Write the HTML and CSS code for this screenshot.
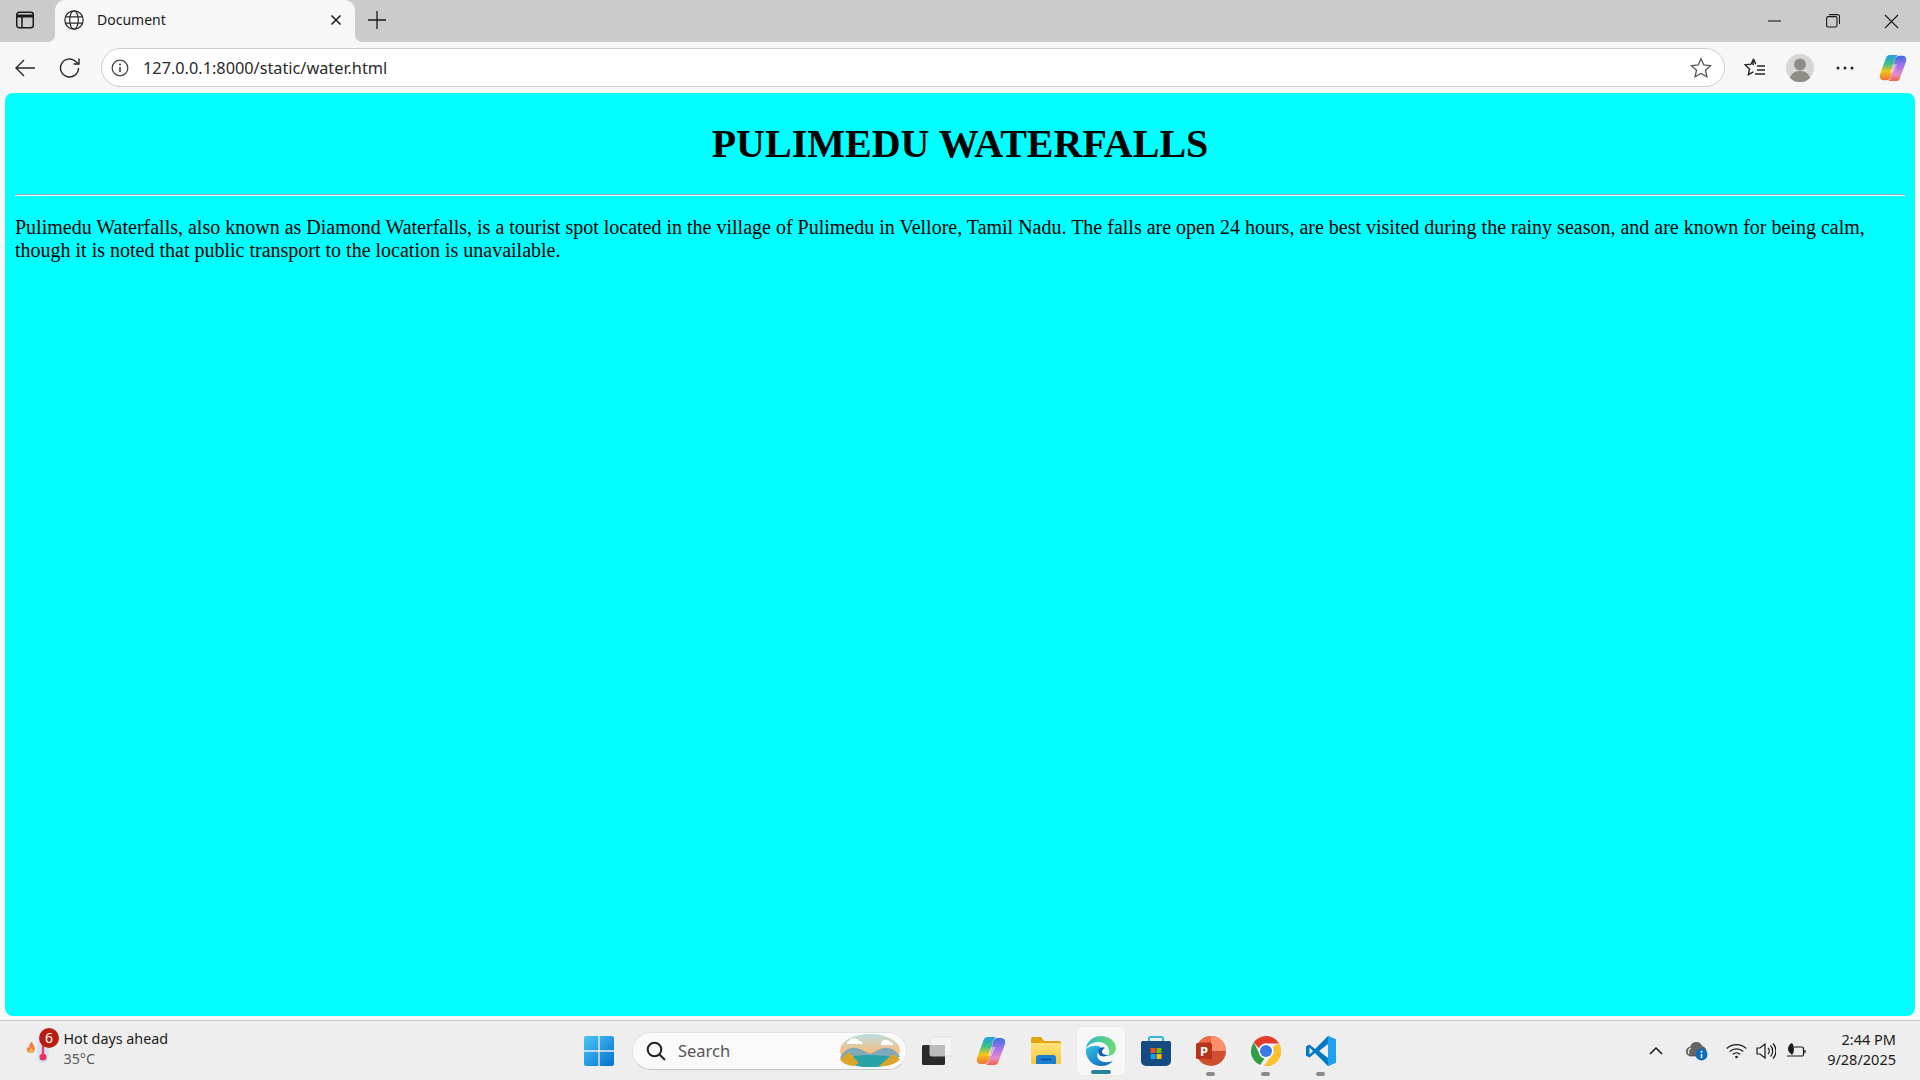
FILE: index.html
```html
<!DOCTYPE html>
<html lang="en">
<head>
<meta charset="utf-8">
<title>Document</title>
<link rel="stylesheet" href="styles.css">
</head>
<body>
<svg class="defs" width="0" height="0" aria-hidden="true">
  <defs>
    <linearGradient id="copA" x1="0" y1="0" x2="0" y2="1"><stop offset="0" stop-color="#1f9fe8"/><stop offset=".35" stop-color="#3fc08a"/><stop offset=".65" stop-color="#f5c518"/><stop offset="1" stop-color="#f4703a"/></linearGradient>
    <linearGradient id="copC" x1="0" y1="0" x2="0" y2="1"><stop offset="0" stop-color="#3a6fe8"/><stop offset=".4" stop-color="#a873e8"/><stop offset=".75" stop-color="#e68ac8"/><stop offset="1" stop-color="#f3603f"/></linearGradient>
    <linearGradient id="winG" x1="0" y1="0" x2="1" y2="1"><stop offset="0" stop-color="#4dc4f7"/><stop offset="1" stop-color="#0072cf"/></linearGradient>
    <linearGradient id="edgeG" x1="0" y1="0" x2="1" y2="1"><stop offset="0" stop-color="#35c1e8"/><stop offset="1" stop-color="#0d5fb0"/></linearGradient>
    <linearGradient id="edgeT" x1="0" y1="0" x2="1" y2="0"><stop offset="0" stop-color="#2fb9c9"/><stop offset="1" stop-color="#6fdc6f"/></linearGradient>
    <linearGradient id="skyG" x1="0" y1="0" x2="0" y2="1"><stop offset="0" stop-color="#b9e0e0"/><stop offset=".55" stop-color="#f8bd84"/><stop offset="1" stop-color="#f7a35a"/></linearGradient>
    <linearGradient id="folderG" x1="0" y1="0" x2="0" y2="1"><stop offset="0" stop-color="#ffe27a"/><stop offset="1" stop-color="#f9c93c"/></linearGradient>
    <g id="copilot">
      <path d="M8 3Q9 1 12 1H20Q18 2 17 5L13 24Q12 28 8 28H5Q0 28 1 22Z" fill="url(#copA)"/>
      <path d="M22 27Q21 29 18 29H10Q12 28 13 25L17 6Q18 2 22 2H25Q30 2 29 8Z" fill="url(#copC)"/>
      <path d="M15 11h4.500L15.500 20H11.500z" fill="#fff" opacity=".4"/>
    </g>
  </defs>
</svg>

<header class="tabstrip">
  <div class="tabstrip-left">
    <svg class="ic-sidebar" width="20" height="20" viewBox="0 0 20 20" fill="none" stroke="#1a1a1a" stroke-width="1.500"><rect x="1.750" y="2.250" width="16.500" height="15.500" rx="2.500"/><path d="M1.750 6h16.500" stroke-width="3"/><path d="M7 6v11.500"/></svg>
  </div>
  <div class="tab">
    <svg width="20" height="20" viewBox="0 0 20 20" fill="none" stroke="#2a2a2a" stroke-width="1.200"><circle cx="10" cy="10" r="9.200"/><ellipse cx="10" cy="10" rx="4.300" ry="9.200"/><path d="M1.500 6.800h17M1.500 13.200h17"/></svg>
    <span class="tab-title">Document</span>
    <svg class="tab-close" width="12" height="12" viewBox="0 0 12 12" stroke="#1a1a1a" stroke-width="1.500"><path d="M1.500 1.500l9 9M10.500 1.500l-9 9"/></svg>
  </div>
  <svg class="ic-plus" width="18" height="18" viewBox="0 0 18 18" stroke="#1a1a1a" stroke-width="1.300"><path d="M9 0v18M0 9h18"/></svg>
  <div class="winctl">
    <svg width="14" height="14" viewBox="0 0 14 14" stroke="#1a1a1a" stroke-width="1.100"><path d="M0 7h13"/></svg>
    <svg width="14" height="14" viewBox="0 0 14 14" fill="none" stroke="#1a1a1a" stroke-width="1.100"><rect x=".6" y="2.600" width="10.400" height="10.400" rx="1.600"/><path d="M3 .6h8.500a2 2 0 0 1 2 2V10"/></svg>
    <svg width="15" height="15" viewBox="0 0 15 15" stroke="#1a1a1a" stroke-width="1.100"><path d="M1 1l13 13M14 1L1 14"/></svg>
  </div>
</header>

<nav class="toolbar">
  <svg class="ic-back" width="20" height="18" viewBox="0 0 20 18" fill="none" stroke="#262626" stroke-width="1.400"><path d="M20 9H1M9 1L1 9l8 8"/></svg>
  <svg class="ic-reload" width="22" height="22" viewBox="0 0 22 22" fill="none" stroke="#262626" stroke-width="1.400"><path d="M19.500 11a9 9 0 1 1-2.800-6.500L19.500 7"/><path d="M20 1.500V7h-5.500"/></svg>
  <div class="address">
    <svg width="18" height="18" viewBox="0 0 18 18" fill="none" stroke="#444" stroke-width="1.300"><circle cx="9" cy="9" r="7.800"/><path d="M9 8v5" stroke-width="1.600"/><circle cx="9" cy="5.500" r="1" fill="#444" stroke="none"/></svg>
    <span class="url">127.0.0.1:8000/static/water.html</span>
    <svg class="ic-star" width="22" height="22" viewBox="0 0 22 22" fill="none" stroke="#555" stroke-width="1.300"><path d="M11 1.800l2.800 6.200 6.700.7-5 4.500 1.400 6.600L11 16.400l-5.900 3.400 1.400-6.600-5-4.500 6.700-.7z"/></svg>
  </div>
  <div class="tools">
    <svg class="tool-fav" width="22" height="22" viewBox="0 0 22 22" fill="none" stroke="#262626" stroke-width="1.400"><path d="M10 7.500l-1-.2L9.500 2 7 7.200l-5.800.7 4.300 4-1.100 5.800 5-2.800"/><path d="M9.500 2l2.300 5.200M13 9h8M13 13h8M11 17h10"/></svg>
    <svg class="tool-profile" width="28" height="28" viewBox="0 0 28 28"><circle cx="14" cy="14" r="14" fill="#d8d6d2"/><circle cx="14" cy="10.500" r="6" fill="#8f8b87"/><path d="M4 24c1.500-5 5-7 10-7s8.500 2 10 7a14 14 0 0 1-20 0z" fill="#8f8b87"/></svg>
    <svg class="tool-dots" width="18" height="4" viewBox="0 0 18 4" fill="#262626"><circle cx="2" cy="2" r="1.500"/><circle cx="9" cy="2" r="1.500"/><circle cx="16" cy="2" r="1.500"/></svg>
    <svg class="tool-copilot" width="28" height="28" viewBox="0 0 30 30"><use href="#copilot"/></svg>
  </div>
</nav>

<div class="viewport">
  <main class="page">
    <h1 class="heading">PULIMEDU WATERFALLS</h1>
    <hr class="rule">
    <p class="copy">Pulimedu Waterfalls, also known as Diamond Waterfalls, is a tourist spot located in the village of Pulimedu in Vellore, Tamil Nadu. The falls are open 24 hours, are best visited during the rainy season, and are known for being calm, though it is noted that public transport to the location is unavailable.</p>
  </main>
</div>

<footer class="taskbar">
  <div class="weather">
    <div class="weather-icon">
      <svg width="28" height="32" viewBox="0 0 28 32"><path d="M6 17c-3.500 0-5-3-3.500-6 .5.800 1 1 1.500.8C4 9 5 7 7 5.500c-.2 2 2.800 3.500 2.800 7 0 2.500-1.500 4.500-3.800 4.500z" fill="#f0803a"/><path d="M6 16.500c-1.500 0-2.300-1.200-1.800-2.800.5.300 1 .3 1.300 0 0-1 .5-1.700 1-2 .3 1 1.500 1.800 1.500 3 0 1-1 1.800-2 1.800z" fill="#fcc24c"/><rect x="12.500" y="4" width="11" height="23" rx="5.500" fill="#cfe4f7"/><rect x="16.800" y="8" width="2.400" height="12" fill="#e8436a"/><circle cx="18" cy="21" r="3.500" fill="#e8325f"/></svg>
      <span class="badge">6</span>
    </div>
    <div class="weather-text">
      <span class="weather-title">Hot days ahead</span>
      <span class="weather-temp">35°C</span>
    </div>
  </div>
  <div class="apps">
    <svg class="app-win" width="30" height="30" viewBox="0 0 30 30" fill="url(#winG)"><path d="M0 2a2 2 0 0 1 2-2h12.300v14.300H0zM15.700 0H28a2 2 0 0 1 2 2v12.300H15.700zM0 15.700h14.300V30H2a2 2 0 0 1-2-2zM15.700 15.700H30V28a2 2 0 0 1-2 2H15.700z"/></svg>
    <div class="searchbox">
      <svg width="20" height="20" viewBox="0 0 20 20" fill="none" stroke="#222" stroke-width="2"><circle cx="8.500" cy="8.500" r="6.800"/><path d="M13.500 13.500L19 19"/></svg>
      <span class="search-label">Search</span>
      <svg class="search-art" width="62" height="33" viewBox="0 0 62 33"><ellipse cx="31" cy="16.500" rx="30" ry="16.500" fill="url(#skyG)"/><path d="M3 20c6-7 12-8 20-4l8 4 8-4c8-4 14-3 20 4l2 3-60 1z" fill="#7fa9b8"/><path d="M10 7c3-4 8-3 10 0 3 0 4 2 3 3H9c-2 0-1-3 1-3zM42 9c2-4 7-4 9-1 2 0 4 2 3 3H42z" fill="#fff"/><path d="M6 24c12-4 38-4 50 0l-8 7c-10 3-24 3-34 0z" fill="#2aa3a8"/><path d="M1 25l9-7 10 11-5 3c-6 0-12-3-14-7zM61 25l-7-5-14 12c8 1 17-2 21-7z" fill="#d9a52c"/></svg>
    </div>
    <svg class="app-taskview" width="30" height="29" viewBox="0 0 30 29"><rect x="0" y="9" width="23" height="20" rx="1.500" fill="#2b2b2b"/><rect x="8" y="1" width="22" height="19" rx="1.500" fill="#f4f4f4" stroke="#dadada" stroke-width=".8"/><rect x="8" y="9" width="15" height="11" fill="#bcbcbc"/></svg>
    <svg class="app-copilot" width="30" height="30" viewBox="0 0 30 30"><use href="#copilot"/></svg>
    <svg class="app-folder" width="30" height="27" viewBox="0 0 30 27"><path d="M0 2a2 2 0 0 1 2-2h8l3 4h15a2 2 0 0 1 2 2v4H0z" fill="#e0a40f"/><path d="M0 6h28a2 2 0 0 1 2 2v19H2a2 2 0 0 1-2-2z" fill="url(#folderG)"/><path d="M5 27v-6a3 3 0 0 1 3-3h14a3 3 0 0 1 3 3v6z" fill="#1a7fd0"/><path d="M10 22.500h10" stroke="#0a4f96" stroke-width="1.500"/></svg>
    <div class="app-edge">
      <svg width="30" height="30" viewBox="0 0 30 30"><path d="M15 0C7 0 1 5 0 12c3-4 7-6 12-6 6 0 10 3 11 8 1 2 0 5-2 6h1c5 0 8-4 8-8C30 5 23 0 15 0z" fill="url(#edgeT)"/><path d="M0 13c-1 9 6 17 15 17 5 0 9-2 12-5-3 1-8 2-12 0-4-2-5-7-2-10 1-1 2-2 3-2-2-3-5-4-8-3-4 0-7 2-8 3z" fill="url(#edgeG)"/><path d="M14 12c-3 2-2 7 1 8 3 1 6 0 7-1-3 0-6-1-6-3s1-3 3-4c-1-1-3-1-5 0z" fill="#0d5fb0"/></svg>
      <span class="run-edge"></span>
    </div>
    <svg class="app-store" width="30" height="30" viewBox="0 0 30 30"><path d="M8 5V2.500A1.500 1.500 0 0 1 9.500 1h11A1.500 1.500 0 0 1 22 2.500V5" fill="none" stroke="#2fb8e0" stroke-width="2"/><path d="M0 6.500A1.500 1.500 0 0 1 1.500 5h27A1.500 1.500 0 0 1 30 6.500V25a5 5 0 0 1-5 5H5a5 5 0 0 1-5-5z" fill="#174a80"/><rect x="9.500" y="12" width="5" height="5" fill="#f25022"/><rect x="15.500" y="12" width="5" height="5" fill="#7fba00"/><rect x="9.500" y="18" width="5" height="5" fill="#00a4ef"/><rect x="15.500" y="18" width="5" height="5" fill="#ffb900"/></svg>
    <div class="app-slot">
      <svg width="30" height="30" viewBox="0 0 30 30"><circle cx="15" cy="15" r="15" fill="#d04f2f"/><path d="M15 0a15 15 0 0 1 15 15H15z" fill="#ff8f6b"/><path d="M15 0A15 15 0 0 0 3 6h12z" fill="#ed6c47"/><rect x="0" y="7" width="16" height="16" rx="1.500" fill="#b7341a"/><text class="ppt-letter" x="8" y="20">P</text></svg>
      <span class="run-dot"></span>
    </div>
    <div class="app-slot">
      <svg width="30" height="30" viewBox="0 0 30 30"><path d="M15 0a15 15 0 0 1 13 7.500H15a7.500 7.500 0 0 0-7 4.700L2.800 6.500A15 15 0 0 1 15 0z" fill="#e33b2e"/><path d="M2.800 6.500L8.500 18a7.500 7.500 0 0 0 5 4.500L9 29A15 15 0 0 1 2.800 6.500z" fill="#2f9e44"/><path d="M28 7.500A15 15 0 0 1 13 30l6-8.500A7.500 7.500 0 0 0 21.500 11z" fill="#fbc02d"/><circle cx="15" cy="15" r="7.500" fill="#fff"/><circle cx="15" cy="15" r="6" fill="#3b78e7"/></svg>
      <span class="run-dot"></span>
    </div>
    <div class="app-slot">
      <svg width="30" height="30" viewBox="0 0 30 30"><path d="M22 0l8 3.500v23L22 30 9 17l-5.500 4.500L0 19.500v-9L3.500 8.500 9 13z" fill="#0078c8"/><path d="M22 0l8 3.500v23L22 30z" fill="#1fa2ee"/><path d="M22 8l-9 7 9 7z" fill="#eeeeee"/><path d="M3.500 11.500L7 15l-3.500 3.500z" fill="#eeeeee"/></svg>
      <span class="run-dot"></span>
    </div>
  </div>
  <div class="tray">
    <svg class="tray-chev" width="14" height="8" viewBox="0 0 14 8" fill="none" stroke="#1a1a1a" stroke-width="1.500"><path d="M1 7l6-6 6 6"/></svg>
    <svg class="tray-cloud" width="22" height="20" viewBox="0 0 22 20"><path d="M5 15a4.500 4.500 0 0 1-.5-9A6 6 0 0 1 16 5.500 5 5 0 0 1 17 15z" fill="#666" stroke="#333" stroke-width=".6"/><path d="M3 13a4 4 0 0 1 2-6" fill="none" stroke="#eee" stroke-width="1.200"/><circle cx="15.500" cy="13.500" r="6" fill="#0f6cbd"/><path d="M15.500 13v4" stroke="#fff" stroke-width="1.500"/><circle cx="15.500" cy="10.700" r="1" fill="#fff"/></svg>
    <svg class="tray-wifi" width="21" height="16" viewBox="0 0 21 16" fill="none" stroke="#1a1a1a" stroke-width="1.200"><path d="M.8 5.500a14 14 0 0 1 19.400 0M3.800 8.500a10 10 0 0 1 13.400 0M6.800 11.300a5.500 5.500 0 0 1 7.400 0"/><circle cx="10.500" cy="14" r="1.300" fill="#1a1a1a" stroke="none"/></svg>
    <svg class="tray-sound" width="20" height="18" viewBox="0 0 20 18" fill="none" stroke="#1a1a1a" stroke-width="1.200"><path d="M1 6h3l5-4v14l-5-4H1z"/><path d="M12 6a4 4 0 0 1 0 6M14.500 3.500a8 8 0 0 1 0 11M17 1.500a11 11 0 0 1 0 15"/></svg>
    <svg class="tray-batt" width="20" height="18" viewBox="0 0 20 18" fill="none" stroke="#1a1a1a" stroke-width="1.200"><path d="M8 5h8a1.500 1.500 0 0 1 1.500 1.500v6A1.500 1.500 0 0 1 16 14H1M19 8v3"/><path d="M6 1C2 3 1 7 3 10l3 3c2-2 3-8 0-12z" fill="#1a1a1a" stroke="none"/></svg>
    <div class="clock">
      <span>2:44 PM</span>
      <span>9/28/2025</span>
    </div>
  </div>
</footer>
</body>
</html>
```
FILE: styles.css
```css
* { box-sizing: border-box; }

html, body { height: 100%; }

body {
  margin: 0;
  height: 1080px;
  overflow: hidden;
  display: flex;
  flex-direction: column;
  background: #f7f7f7;
  font-family: "Noto Sans", "Open Sans", sans-serif;
  color: #1a1a1a;
}

svg { display: block; flex: none; }
.defs { position: absolute; }

/* Tab strip */
.tabstrip {
  height: 42px;
  flex: none;
  display: flex;
  align-items: center;
  background: #cbcbcb;
}
.tabstrip-left { width: 55px; padding-left: 15px; padding-bottom: 2px; }
.tab {
  position: relative;
  width: 300px;
  height: 42px;
  display: flex;
  align-items: center;
  padding: 0 13px 2px 9px;
  background: #f7f7f7;
  border-radius: 10px 10px 0 0;
}
.tab::before, .tab::after {
  content: "";
  position: absolute;
  bottom: 0;
  width: 8px;
  height: 8px;
}
.tab::before { left: -8px; background: radial-gradient(circle at 0 0, transparent 8px, #f7f7f7 8.5px); }
.tab::after { right: -8px; background: radial-gradient(circle at 100% 0, transparent 8px, #f7f7f7 8.5px); }
.tab-title { margin-left: 13px; margin-bottom: 2px; font-size: 14px; }
.tab-close { margin-left: auto; }
.ic-plus { margin-left: 13px; margin-bottom: 2px; }
.winctl {
  margin-left: auto;
  display: flex;
  align-items: center;
  gap: 44px;
  padding-right: 21px;
}

/* Toolbar */
.toolbar {
  height: 51px;
  flex: none;
  display: flex;
  align-items: center;
  padding: 0 13px 0 15px;
  background: #f7f7f7;
}
.ic-reload { margin-left: 24px; }
.address {
  width: 1625px;
  height: 39px;
  margin-left: 20px;
  display: flex;
  align-items: center;
  padding: 0 12px 0 9px;
  background: #fff;
  border: 1px solid #cdcdcd;
  border-radius: 20px;
}
.url { margin-left: 14px; font-size: 16.3px; color: #2b2b2b; }
.ic-star { margin-left: auto; }
.tools { display: flex; align-items: center; margin-left: 19px; }
.tool-profile { margin-left: 20px; }
.tool-dots { margin-left: 22px; }
.tool-copilot { margin-left: 25px; }

/* Page */
.viewport {
  flex: 1;
  min-height: 0;
  padding: 0 5px 4px;
  display: flex;
}
.page {
  flex: 1;
  padding: 0 10px;
  display: flow-root;
  background: #0ff;
  border-radius: 8px;
  color: #000;
  font-family: "Liberation Serif", "Times New Roman", serif;
}
.heading {
  margin: 28px 0 27px;
  font-size: 40px;
  line-height: 46px;
  font-weight: 700;
  text-align: center;
}
.rule {
  height: 2px;
  margin: 0;
  border: 0;
  border-top: 1px solid #9ea8a8;
  border-bottom: 1px solid #dff;
}
.copy {
  margin: 20px 0;
  font-size: 20px;
  line-height: 23px;
}

/* Taskbar */
.taskbar {
  height: 60px;
  flex: none;
  display: flex;
  align-items: center;
  background: #eee;
  border-top: 1px solid #c6c6c6;
}
.weather {
  width: 584px;
  height: 100%;
  display: flex;
  align-items: center;
  padding-left: 25px;
}
.weather-icon {
  position: relative;
  width: 28px;
  height: 32px;
  margin-top: 3px;
}
.badge {
  position: absolute;
  left: 14px;
  top: -8px;
  width: 20px;
  height: 20px;
  border-radius: 50%;
  background: #b91d12;
  color: #fff;
  font-size: 14px;
  line-height: 20px;
  text-align: center;
}
.weather-text {
  display: flex;
  flex-direction: column;
  margin-left: 10.500px;
  margin-bottom: 4px;
  font-size: 14.3px;
  line-height: 20px;
}
.weather-temp { color: #5a5a5a; }

.apps {
  display: flex;
  align-items: center;
  height: 100%;
}
.searchbox {
  width: 275px;
  height: 38px;
  margin-left: 18px;
  display: flex;
  align-items: center;
  padding: 0 5px 0 13px;
  background: #fafafa;
  border: 1px solid #e2e2e2;
  border-bottom-color: #c6c6c6;
  border-radius: 19px;
}
.search-label { margin-left: 12px; font-size: 16.5px; color: #555; }
.search-art { margin-left: auto; }
.app-taskview { margin-left: 15px; }
.app-copilot { margin-left: 24px; }
.app-folder { margin-left: 25px; }
.app-edge {
  position: relative;
  width: 48px;
  height: 48px;
  margin-left: 16px;
  display: flex;
  align-items: center;
  justify-content: center;
  background: #f7f7f7;
  border-radius: 5px;
  box-shadow: 0 0 1px #d0d0d0;
}
.run-edge {
  position: absolute;
  left: 14px;
  bottom: 1px;
  width: 20px;
  height: 4px;
  border-radius: 2px;
  background: #2b8494;
}
.app-store { margin-left: 16px; }
.app-slot {
  position: relative;
  margin-left: 25px;
}
.run-dot {
  position: absolute;
  left: 10px;
  bottom: -10px;
  width: 9px;
  height: 4px;
  border-radius: 2px;
  background: #8a8a8a;
}

.tray {
  margin-left: auto;
  display: flex;
  align-items: center;
  padding-right: 24px;
}
.tray-cloud { margin-left: 23px; }
.tray-wifi { margin-left: 18px; }
.tray-sound { margin-left: 9px; }
.tray-batt { margin-left: 10px; }
.clock {
  display: flex;
  flex-direction: column;
  align-items: flex-end;
  margin-left: 21px;
  margin-bottom: 4px;
  font-size: 14.5px;
  line-height: 20px;
}
.ppt-letter {
  font-family: "Noto Sans", sans-serif;
  font-size: 13px;
  font-weight: 700;
  fill: #fff;
  text-anchor: middle;
}
```
